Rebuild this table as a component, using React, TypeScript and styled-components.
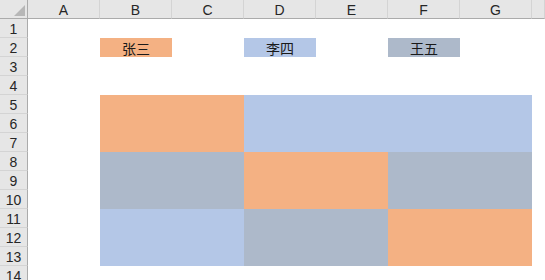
import React from 'react';
import styled, { createGlobalStyle } from 'styled-components';

const GlobalStyle = createGlobalStyle`
  html, body {
    margin: 0;
    padding: 0;
    background: #ffffff;
    overflow: hidden;
  }
`;

const COLS = ['A', 'B', 'C', 'D', 'E', 'F', 'G', ''];
const ROWS = Array.from({ length: 14 }, (_, i) => i + 1);

const colors = {
  orange: '#f4b183',
  blue: '#b4c7e7',
  slate: '#adb9ca',
};

type Tone = keyof typeof colors;

const Sheet = styled.div`
  display: grid;
  grid-template-columns: 28px repeat(7, 72px) 1fr;
  grid-template-rows: repeat(15, 19px);
  width: 545px;
  height: 280px;
  overflow: hidden;
  font-family: "Liberation Sans", Arial, sans-serif;
`;

const Corner = styled.div`
  grid-column: 1;
  grid-row: 1;
  position: relative;
  box-sizing: border-box;
  background: #e6e6e6;
  border-right: 1px solid #ababab;
  border-bottom: 1px solid #ababab;

  &::after {
    content: '';
    position: absolute;
    right: 2px;
    bottom: 2px;
    width: 0;
    height: 0;
    border-left: 11px solid transparent;
    border-bottom: 11px solid #b7b7b7;
  }
`;

const ColHead = styled.div<{ $col: number }>`
  grid-column: ${(p) => p.$col};
  grid-row: 1;
  box-sizing: border-box;
  display: flex;
  align-items: center;
  justify-content: center;
  background: #e6e6e6;
  border-right: 1px solid #d4d4d4;
  border-bottom: 1px solid #ababab;
  color: #262626;
  font-size: 14px;
  padding-top: 1px;
`;

const RowHead = styled.div<{ $row: number }>`
  grid-column: 1;
  grid-row: ${(p) => p.$row};
  box-sizing: border-box;
  display: flex;
  align-items: center;
  justify-content: center;
  background: #e6e6e6;
  border-right: 1px solid #ababab;
  border-bottom: 1px solid #d4d4d4;
  color: #262626;
  font-size: 14px;
  padding-top: 1px;
`;

const Fill = styled.div<{ $tone: Tone; $col: string; $row: string }>`
  grid-column: ${(p) => p.$col};
  grid-row: ${(p) => p.$row};
  background: ${(p) => colors[p.$tone]};
  display: flex;
  align-items: center;
  justify-content: center;
  color: #1a1a1a;
  font-family: "Noto Sans CJK SC", "Liberation Sans", sans-serif;
  font-size: 14px;
`;

// grid column index: A=2 ... G=8; grid row index: sheet row + 1
const labels: { text: string; tone: Tone; col: string }[] = [
  { text: '张三', tone: 'orange', col: '3' },
  { text: '李四', tone: 'blue', col: '5' },
  { text: '王五', tone: 'slate', col: '7' },
];

const blocks: { tone: Tone; col: string; row: string }[] = [
  { tone: 'orange', col: '3 / 5', row: '6 / 9' },
  { tone: 'blue', col: '5 / 9', row: '6 / 9' },
  { tone: 'slate', col: '3 / 5', row: '9 / 12' },
  { tone: 'orange', col: '5 / 7', row: '9 / 12' },
  { tone: 'slate', col: '7 / 9', row: '9 / 12' },
  { tone: 'blue', col: '3 / 5', row: '12 / 15' },
  { tone: 'slate', col: '5 / 7', row: '12 / 15' },
  { tone: 'orange', col: '7 / 9', row: '12 / 15' },
];

export default function App() {
  return (
    <>
      <GlobalStyle />
      <Sheet>
        <Corner />
        {COLS.map((c, i) => (
          <ColHead key={'c' + i} $col={i + 2}>{c}</ColHead>
        ))}
        {ROWS.map((r) => (
          <RowHead key={'r' + r} $row={r + 1}>{r}</RowHead>
        ))}
        {labels.map((l) => (
          <Fill key={l.text} $tone={l.tone} $col={l.col} $row="3">{l.text}</Fill>
        ))}
        {blocks.map((b, i) => (
          <Fill key={'b' + i} $tone={b.tone} $col={b.col} $row={b.row} />
        ))}
      </Sheet>
    </>
  );
}
